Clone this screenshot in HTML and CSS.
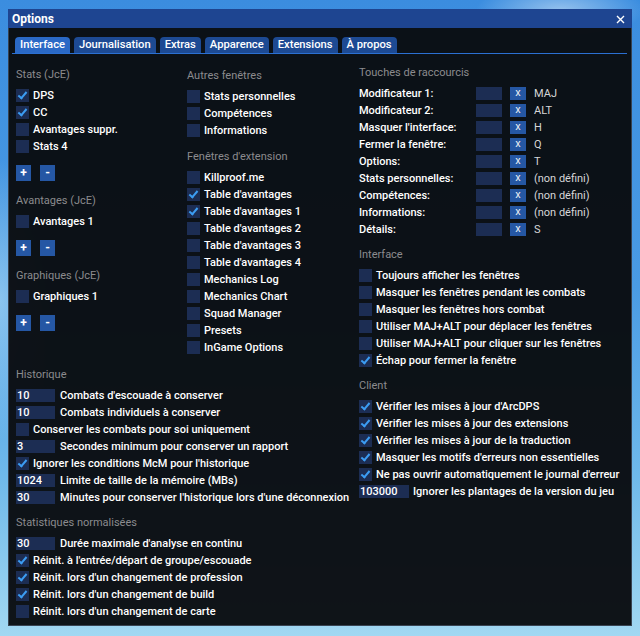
FILE: index.html
```html
<!DOCTYPE html>
<html lang="fr">
<head>
<meta charset="utf-8">
<title>Options</title>
<link rel="stylesheet" href="styles.css">
</head>
<body>
<div class="win">
  <div class="titlebar">
    <span class="title">Options</span>
    <svg class="close" width="9" height="9" viewBox="0 0 9 9"><path d="M1 1 L8 8 M8 1 L1 8" stroke="#fff" stroke-width="1.4" fill="none"/></svg>
  </div>
  <div class="tabbar">
    <div class="tab active">Interface</div>
    <div class="tab">Journalisation</div>
    <div class="tab">Extras</div>
    <div class="tab">Apparence</div>
    <div class="tab">Extensions</div>
    <div class="tab">À propos</div>
  </div>
  <div class="content">
    <div class="left">
      <div class="toprow">
        <div class="col col1">
          <div class="hdr">Stats (JcE)</div>
          <div class="row"><span class="cb on"></span>DPS</div>
          <div class="row"><span class="cb on"></span>CC</div>
          <div class="row"><span class="cb"></span>Avantages suppr.</div>
          <div class="row"><span class="cb"></span>Stats 4</div>
          <div class="btns"><span class="btn">+</span><span class="btn">-</span></div>
          <div class="hdr sec">Avantages (JcE)</div>
          <div class="row"><span class="cb"></span>Avantages 1</div>
          <div class="btns"><span class="btn">+</span><span class="btn">-</span></div>
          <div class="hdr sec">Graphiques (JcE)</div>
          <div class="row"><span class="cb"></span>Graphiques 1</div>
          <div class="btns"><span class="btn">+</span><span class="btn">-</span></div>
        </div>
        <div class="col col2">
          <div class="hdr">Autres fenêtres</div>
          <div class="row"><span class="cb"></span>Stats personnelles</div>
          <div class="row"><span class="cb"></span>Compétences</div>
          <div class="row"><span class="cb"></span>Informations</div>
          <div class="hdr sec2">Fenêtres d'extension</div>
          <div class="row"><span class="cb"></span>Killproof.me</div>
          <div class="row"><span class="cb on"></span>Table d'avantages</div>
          <div class="row"><span class="cb on"></span>Table d'avantages 1</div>
          <div class="row"><span class="cb"></span>Table d'avantages 2</div>
          <div class="row"><span class="cb"></span>Table d'avantages 3</div>
          <div class="row"><span class="cb"></span>Table d'avantages 4</div>
          <div class="row"><span class="cb"></span>Mechanics Log</div>
          <div class="row"><span class="cb"></span>Mechanics Chart</div>
          <div class="row"><span class="cb"></span>Squad Manager</div>
          <div class="row"><span class="cb"></span>Presets</div>
          <div class="row"><span class="cb"></span>InGame Options</div>
        </div>
      </div>
      <div class="block hist">
        <div class="hdr">Historique</div>
        <div class="row"><span class="inp">10</span><span class="il">Combats d'escouade à conserver</span></div>
        <div class="row"><span class="inp">10</span><span class="il">Combats individuels à conserver</span></div>
        <div class="row"><span class="cb"></span>Conserver les combats pour soi uniquement</div>
        <div class="row"><span class="inp">3</span><span class="il">Secondes minimum pour conserver un rapport</span></div>
        <div class="row"><span class="cb on"></span>Ignorer les conditions McM pour l'historique</div>
        <div class="row"><span class="inp">1024</span><span class="il">Limite de taille de la mémoire (MBs)</span></div>
        <div class="row"><span class="inp">30</span><span class="il">Minutes pour conserver l'historique lors d'une déconnexion</span></div>
      </div>
      <div class="block norm">
        <div class="hdr">Statistiques normalisées</div>
        <div class="row"><span class="inp">30</span><span class="il">Durée maximale d'analyse en continu</span></div>
        <div class="row"><span class="cb on"></span>Réinit. à l'entrée/départ de groupe/escouade</div>
        <div class="row"><span class="cb on"></span>Réinit. lors d'un changement de profession</div>
        <div class="row"><span class="cb on"></span>Réinit. lors d'un changement de build</div>
        <div class="row"><span class="cb"></span>Réinit. lors d'un changement de carte</div>
      </div>
    </div>
    <div class="col col3">
      <div class="hdr">Touches de raccourcis</div>
      <div class="key"><span class="kl">Modificateur 1:</span><span class="kb"></span><span class="kx">x</span><span class="kv">MAJ</span></div>
      <div class="key"><span class="kl">Modificateur 2:</span><span class="kb"></span><span class="kx">x</span><span class="kv">ALT</span></div>
      <div class="key"><span class="kl">Masquer l'interface:</span><span class="kb"></span><span class="kx">x</span><span class="kv">H</span></div>
      <div class="key"><span class="kl">Fermer la fenêtre:</span><span class="kb"></span><span class="kx">x</span><span class="kv">Q</span></div>
      <div class="key"><span class="kl">Options:</span><span class="kb"></span><span class="kx">x</span><span class="kv">T</span></div>
      <div class="key"><span class="kl">Stats personnelles:</span><span class="kb"></span><span class="kx">x</span><span class="kv">(non défini)</span></div>
      <div class="key"><span class="kl">Compétences:</span><span class="kb"></span><span class="kx">x</span><span class="kv">(non défini)</span></div>
      <div class="key"><span class="kl">Informations:</span><span class="kb"></span><span class="kx">x</span><span class="kv">(non défini)</span></div>
      <div class="key"><span class="kl">Détails:</span><span class="kb"></span><span class="kx">x</span><span class="kv">S</span></div>
      <div class="hdr sec3">Interface</div>
      <div class="row"><span class="cb"></span>Toujours afficher les fenêtres</div>
      <div class="row"><span class="cb"></span>Masquer les fenêtres pendant les combats</div>
      <div class="row"><span class="cb"></span>Masquer les fenêtres hors combat</div>
      <div class="row"><span class="cb"></span>Utiliser MAJ+ALT pour déplacer les fenêtres</div>
      <div class="row"><span class="cb"></span>Utiliser MAJ+ALT pour cliquer sur les fenêtres</div>
      <div class="row"><span class="cb on"></span>Échap pour fermer la fenêtre</div>
      <div class="hdr sec3">Client</div>
      <div class="row"><span class="cb on"></span>Vérifier les mises à jour d'ArcDPS</div>
      <div class="row"><span class="cb on"></span>Vérifier les mises à jour des extensions</div>
      <div class="row"><span class="cb on"></span>Vérifier les mises à jour de la traduction</div>
      <div class="row"><span class="cb on"></span>Masquer les motifs d'erreurs non essentielles</div>
      <div class="row"><span class="cb on"></span>Ne pas ouvrir automatiquement le journal d'erreur</div>
      <div class="row"><span class="inp wide">103000</span><span class="il2">Ignorer les plantages de la version du jeu</span></div>
    </div>
  </div>
</div>
</body>
</html>
```

FILE: styles.css
```css
html {
  height: 100%;
  background:
    radial-gradient(ellipse 120px 40px at 560px 10px, rgba(255,255,255,0.45), rgba(255,255,255,0) 70%),
    radial-gradient(ellipse 80px 200px at 0px 300px, rgba(200,235,250,0.5), rgba(200,235,250,0) 70%),
    linear-gradient(180deg, #3b8ddf 0%, #4a9be4 45%, #6fb9ea 75%, #a2d8f2 100%);
}
body {
  margin: 9px 8px 0 8px;
  font-family: Roboto, "Liberation Sans", sans-serif;
  font-size: 11px;
  color: #ffffff;
}
.win {
  width: 624px;
  height: 617px;
  box-sizing: border-box;
  background: rgba(9, 11, 15, 0.96);
  border: 1px solid rgba(100, 115, 140, 0.5);
  display: flex;
  flex-direction: column;
}
.titlebar {
  height: 18px;
  background: #1e4591;
  display: flex;
  align-items: center;
  justify-content: space-between;
  padding: 1px 7px 0 3px;
  margin: -1px -1px 0 -1px;
}
.title {
  font-weight: 700;
  font-size: 12px;
  padding-left: 1px;
}
.close { display: block; }
.tabbar {
  display: flex;
  gap: 4px;
  margin: 0 4px 0 3px;
  padding: 9px 0 0 3px;
  border-bottom: 1px solid #2b70d2;
}
.tab {
  height: 16px;
  line-height: 16px;
  padding: 0 5px;
  background: #1d4a93;
  border-radius: 4px 4px 0 0;
  font-weight: 500;
  font-size: 11.2px;
  white-space: nowrap;
}
.tab.active { background: #2a69c6; }
.content {
  display: flex;
  padding: 10px 0 0 7px;
}
.left { width: 343px; flex: none; }
.toprow { display: flex; }
.col { display: flex; flex-direction: column; }
.col1 { width: 171px; padding-top: 2px; }
.col2 { width: 172px; padding-top: 3px; }
.col3 { flex: 1; }
.hdr {
  height: 17px;
  line-height: 17px;
  color: #8b8b8e;
  margin-bottom: 4px;
  white-space: nowrap;
}
.sec { margin-top: 11px; }
.sec2 { margin-top: 9px; }
.sec3 { margin-top: 8px; }
.row {
  height: 17px;
  display: flex;
  align-items: center;
  gap: 4px;
  font-weight: 500;
  white-space: nowrap;
}
.cb {
  width: 13px;
  height: 13px;
  flex: none;
  background: #1c2d53;
  position: relative;
}
.cb.on::after {
  content: "";
  position: absolute;
  left: 4px;
  top: 1px;
  width: 3px;
  height: 7px;
  border-right: 2px solid #3c9df3;
  border-bottom: 2px solid #3c9df3;
  transform: rotate(40deg);
}
.btns {
  display: flex;
  gap: 9px;
  margin-top: 10px;
}
.btn {
  width: 15px;
  height: 16px;
  background: #2557a4;
  display: flex;
  align-items: center;
  justify-content: center;
  font-weight: 700;
  font-size: 12px;
}
.block { margin-top: 10px; }
.norm { margin-top: 8px; }
.inp {
  width: 38px;
  height: 13px;
  line-height: 13px;
  background: #1c2d53;
  padding-left: 1px;
  flex: none;
  font-weight: 500;
}
.inp.wide { width: 49px; }
.il { margin-left: 1px; }
.key {
  height: 17px;
  display: flex;
  align-items: center;
  white-space: nowrap;
}
.kl {
  width: 117px;
  font-weight: 500;
}
.kb {
  width: 26px;
  height: 13px;
  background: #1c2d53;
}
.kx {
  width: 16px;
  height: 13px;
  margin-left: 8px;
  background: #2557a4;
  text-align: center;
  line-height: 12px;
  color: #e8ecf4;
}
.kv {
  margin-left: 8px;
  color: #d6d6d8;
}
```
